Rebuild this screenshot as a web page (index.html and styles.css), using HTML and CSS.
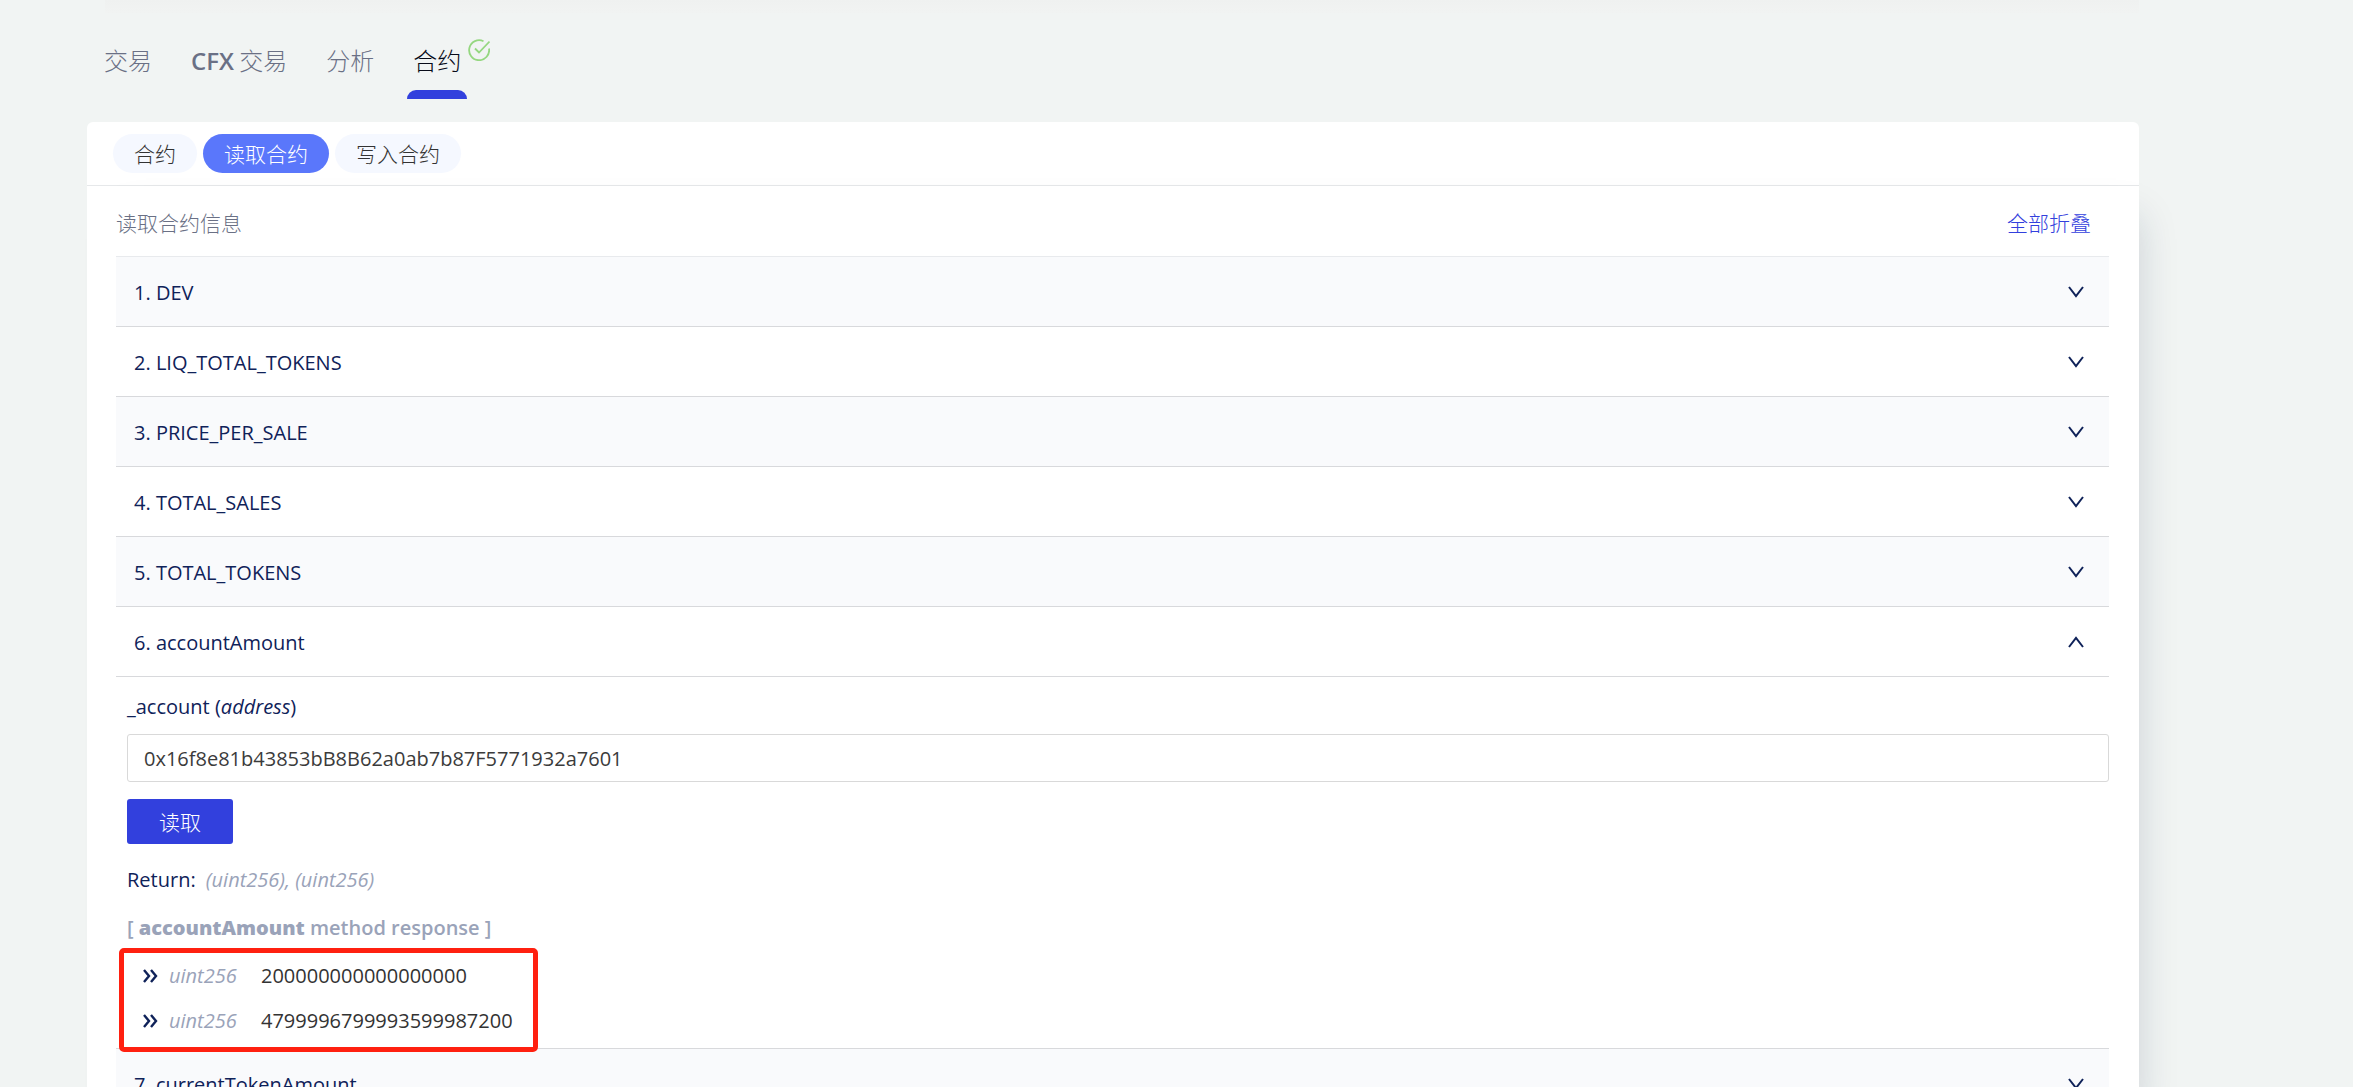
FILE: index.html
```
<!DOCTYPE html>
<html lang="zh-CN">
<head>
<meta charset="utf-8">
<title>合约</title>
<link rel="stylesheet" href="styles.css">
</head>
<body>
<svg class="symbols" aria-hidden="true">
  <symbol id="chevron" viewBox="0 0 16 12"><path d="M1 1L8 10L15 1" fill="none" stroke="currentColor" stroke-width="2"/></symbol>
  <symbol id="double" viewBox="0 0 15 14"><path d="M1 1L6 7L1 13M8 1L13 7L8 13" fill="none" stroke="currentColor" stroke-width="2.4"/></symbol>
</svg>
<div class="page">
  <div class="overview-edge"></div>
  <nav class="tabs">
    <a class="tab" href="#tx">交易</a>
    <a class="tab" href="#cfx"><span class="latin">CFX</span> 交易</a>
    <a class="tab" href="#analysis">分析</a>
    <a class="tab active" href="#contract">合约
      <svg class="verified" viewBox="0 0 22 22"><path d="M15.500 2.200A10 10 0 1 0 21 9.500M7 9.500L11 13.500L21.500 2.500" fill="none" stroke="#95d780" stroke-width="1.800"/></svg>
    </a>
  </nav>
  <main class="card">
    <div class="pills">
      <button class="pill">合约</button>
      <button class="pill selected">读取合约</button>
      <button class="pill">写入合约</button>
    </div>
    <section class="panel">
      <header class="panel-head">
        <span>读取合约信息</span>
        <a href="#collapse">全部折叠</a>
      </header>
      <button class="row">1. DEV<svg class="chevron"><use href="#chevron"/></svg></button>
      <button class="row">2. LIQ_TOTAL_TOKENS<svg class="chevron"><use href="#chevron"/></svg></button>
      <button class="row">3. PRICE_PER_SALE<svg class="chevron"><use href="#chevron"/></svg></button>
      <button class="row">4. TOTAL_SALES<svg class="chevron"><use href="#chevron"/></svg></button>
      <button class="row">5. TOTAL_TOKENS<svg class="chevron"><use href="#chevron"/></svg></button>
      <button class="row">6. accountAmount<svg class="chevron up"><use href="#chevron"/></svg></button>
      <form class="method">
        <label for="account">_account (<i>address</i>)</label>
        <input id="account" type="text" value="0x16f8e81b43853bB8B62a0ab7b87F5771932a7601">
        <button class="query" type="button">读取</button>
        <p class="returns">Return: <i>(uint256), (uint256)</i></p>
        <p class="response">[ <b>accountAmount</b> method response ]</p>
        <div class="results">
          <div class="result"><svg><use href="#double"/></svg><i>uint256</i><span>200000000000000000</span></div>
          <div class="result"><svg><use href="#double"/></svg><i>uint256</i><span>4799996799993599987200</span></div>
          <div class="highlight"></div>
        </div>
      </form>
      <button class="row">7. currentTokenAmount<svg class="chevron"><use href="#chevron"/></svg></button>
    </section>
  </main>
</div>
</body>
</html>
```
FILE: styles.css
```
* { box-sizing: border-box; }
html { height: 100%; overflow: hidden; }
body {
  margin: 0;
  height: 100%;
  overflow: hidden;
  background: #f1f4f3;
  color: #0f2259;
  font: 20px/30px "Open Sans", "Noto Sans CJK SC", sans-serif;
}
button, input { font: inherit; }
a { text-decoration: none; }
i { color: #9aa3b9; }
.symbols { position: absolute; width: 0; height: 0; }
.page { padding: 0 214px 0 87px; }
.overview-edge {
  height: 13px;
  margin-left: 18px;
  background: linear-gradient(#eff1f0, #f1f3f2);
}
.tabs {
  display: flex;
  gap: 27px;
  height: 109px;
  padding: 26px 0 23px 11px;
}
.tab {
  position: relative;
  padding: 3px 6px 0;
  font-family: "Noto Sans CJK SC", sans-serif;
  font-size: 24px;
  font-weight: 300;
  line-height: 36px;
  color: #6a7085;
  white-space: nowrap;
}
.tab .latin { font-family: "Open Sans", sans-serif; font-weight: 600; }
.tab.active { color: #080b18; }
.tab.active::after {
  content: "";
  position: absolute;
  left: 0;
  right: 0;
  bottom: 0;
  height: 9px;
  border-radius: 9px 9px 0 0;
  background: #3240dd;
}
.verified { position: absolute; left: 61px; top: 0; width: 22px; height: 22px; }
.card { border-radius: 6px; background: #fff; }
.pills {
  display: flex;
  gap: 6px;
  padding: 12px 26px;
  border-bottom: 1px solid #e6e8ea;
}
.pill {
  height: 39px;
  padding: 1px 21px 0;
  border: 0;
  border-radius: 20px;
  background: #f5f8ff;
  color: #333;
  font-size: 21px;
  font-weight: 300;
  line-height: 38px;
}
.pill.selected { background: #5a77fb; color: #fff; }
.panel {
  padding: 0 30px 0 29px;
  background: #fff;
  box-shadow: 18px 12px 36px -18px rgba(20, 40, 70, .17);
}
.panel-head {
  display: flex;
  justify-content: space-between;
  align-items: center;
  height: 71px;
  padding: 3px 18px 0 0;
  border-bottom: 1px solid #e8eaed;
  font-size: 21px;
  font-weight: 300;
  color: #6a7085;
}
.panel-head a { color: #3240dd; }
.row {
  display: flex;
  justify-content: space-between;
  align-items: center;
  width: 100%;
  height: 70px;
  padding: 2px 25px 0 18px;
  border: 0;
  border-bottom: 1px solid #d8d9dc;
  background: #fff;
  color: inherit;
  text-align: left;
}
.row:nth-of-type(odd) { background: #f9fafc; }
.chevron { width: 16px; height: 12px; margin-bottom: 2px; }
.chevron.up { transform: rotate(180deg); }
.method { padding: 15px 0 3px 11px; border-bottom: 1px solid #d8d9dc; }
.method label { display: block; }
.method label i { color: inherit; }
.method input {
  display: block;
  width: 100%;
  height: 48px;
  margin-top: 12px;
  padding: 0 16px;
  border: 1px solid #d9d9d9;
  border-radius: 3px;
  color: #3b3b3b;
}
.query {
  display: block;
  width: 106px;
  height: 45px;
  margin-top: 17px;
  padding: 0;
  border: 0;
  border-radius: 3px;
  background: #3240dd;
  color: #fff;
  font-size: 21px;
  font-weight: 300;
}
.returns { margin: 21px 0 0; }
.returns i { margin-left: 5px; }
.response { margin: 18px 0 0; color: #9aa3b9; font-weight: 600; }
.results { position: relative; padding: 10px 0 2px; }
.result { display: flex; align-items: center; height: 45px; padding-left: 16px; }
.result svg { width: 15px; height: 14px; margin-right: 11px; }
.result i { width: 92px; }
.result span { color: #333; }
.highlight {
  position: absolute;
  left: -8px;
  top: 5px;
  width: 419px;
  height: 104px;
  border: 5px solid #ff2010;
  border-radius: 5px;
}
```
